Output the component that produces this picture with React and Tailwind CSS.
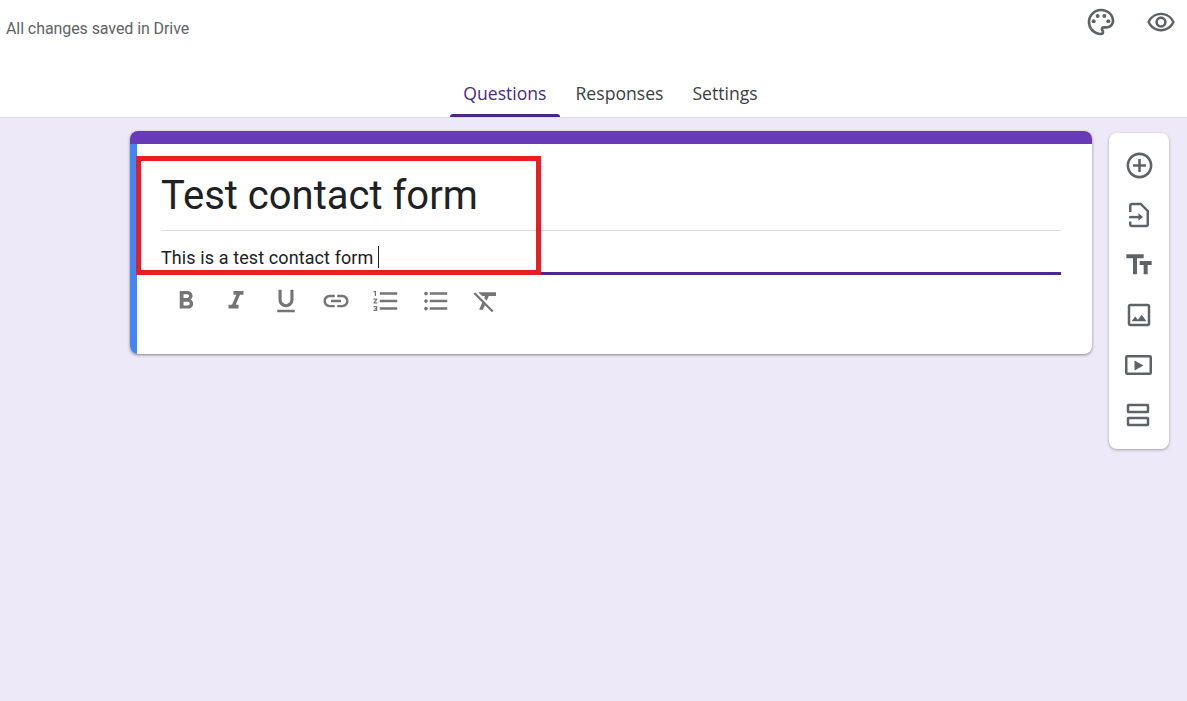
import {
  MdOutlinePalette, MdOutlineRemoveRedEye, MdAddCircleOutline, MdTextFields, MdOutlineImage,
  MdFormatBold, MdFormatItalic, MdFormatUnderlined,
  MdLink, MdFormatListNumbered, MdFormatListBulleted, MdFormatClear,
} from 'react-icons/md';

const ImportIcon = ({ size = 28 }) => (
  <svg width={size} height={size} viewBox="0 0 24 24" fill="none" stroke="currentColor" strokeWidth="2.1">
    <path d="M4.500 9.500V4a1.500 1.500 0 0 1 1.500-1.500H13.500L19.500 8.500V20a1.500 1.500 0 0 1-1.500 1.500H6a1.500 1.500 0 0 1-1.500-1.500V17.500" />
    <path d="M3.500 13.800H12.500" />
    <path d="M11.500 10.500V17L15.500 13.800z" fill="currentColor" stroke="none" />
  </svg>
);

const VideoIcon = ({ size = 28 }) => (
  <svg width={size} height={size} viewBox="0 0 28 28" fill="none" stroke="currentColor" strokeWidth="2.5">
    <rect x="1.250" y="5.250" width="24.500" height="17.500" rx="1" />
    <path d="M9.500 9.500V19.500L18.500 14.500z" fill="currentColor" stroke="none" />
  </svg>
);

const SectionIcon = ({ size = 28 }) => (
  <svg width={size} height={size} viewBox="0 0 28 28" fill="none" stroke="currentColor" strokeWidth="2.5">
    <rect x="3" y="4" width="20" height="7" rx="0.5" />
    <rect x="3" y="17" width="20" height="7" rx="0.5" />
  </svg>
);

const tools = [MdFormatBold, MdFormatItalic, MdFormatUnderlined, MdLink, MdFormatListNumbered, MdFormatListBulleted, MdFormatClear];
const sideIcons = [
  { Icon: MdAddCircleOutline, size: 31 },
  { Icon: ImportIcon, size: 28 },
  { Icon: MdTextFields, size: 32 },
  { Icon: MdOutlineImage, size: 30 },
  { Icon: VideoIcon, size: 28 },
  { Icon: SectionIcon, size: 28 },
];

export default function App() {
  return (
    <div className="min-h-[701px] bg-[#eee9f8] font-['Roboto',sans-serif] overflow-hidden">
      {/* Top bar */}
      <header className="bg-white h-[118px] border-b border-[#dadce0] flex flex-col">
        <div className="flex justify-between h-[73px]">
          <span className="pl-[6px] pt-[20px] text-[16px] leading-[18px] tracking-[-0.08px] text-[#5f6368]">All changes saved in Drive</span>
          <div className="flex items-center h-[44px] gap-[29px] pr-[11px] text-[#5f6368]">
            <MdOutlinePalette size={32} />
            <MdOutlineRemoveRedEye size={30} />
          </div>
        </div>
        <nav className="flex justify-center gap-[3px] h-[44px] text-[17.6px] text-[#3c4043] font-['Open_Sans',sans-serif] pl-[34px]">
          <a className="relative px-[13px] leading-[40px] text-[#4a2a8a]">
            Questions
            <span className="absolute left-0 right-0 bottom-0 h-[3px] rounded-t bg-[#4a2685]"></span>
          </a>
          <a className="px-[13px] leading-[40px]">Responses</a>
          <a className="px-[13px] leading-[40px]">Settings</a>
        </nav>
      </header>

      <main className="flex items-start pl-[130px] pt-[13px] gap-[17px]">
        {/* Form title card */}
        <div className="relative w-[962px] h-[223px] bg-white rounded-lg shadow-[0_1px_3px_rgba(60,64,67,0.6)] overflow-hidden">
          <div className="h-[13px] bg-[#673ab7]"></div>
          <div className="h-[210px] border-l-[7px] border-[#4285f4] pl-[24px] pr-[31px]">
            <h1 className="text-[40px] leading-[48px] pt-[28px] h-[87px] text-[#202124] border-b border-[#dadce0] box-border">Test contact form</h1>
            <div className="h-[44px] border-b-[3px] border-[#4a2a8a] pt-[15px] text-[18px] leading-[24px] tracking-[0.1px] text-[#202124] flex items-start">
              <span>This is a test contact form</span>
              <span className="ml-[5px] w-px h-[22px] bg-[#202124]"></span>
            </div>
            <div className="flex items-center gap-[20px] pt-[11px] pl-[10px] text-[#757575]">
              {tools.map((Icon, i) => <Icon key={i} size={30} />)}
            </div>
          </div>
        </div>

        {/* Side toolbar */}
        <aside className="w-[60px] h-[316px] mt-[2px] bg-white rounded-lg shadow-[0_1px_3px_rgba(60,64,67,0.45)] flex flex-col items-center pt-[7px] text-[#5f6368]">
          {sideIcons.map(({ Icon, size }, i) => (
            <div key={i} className="h-[50px] flex items-center justify-center">
              <Icon size={size} />
            </div>
          ))}
        </aside>
      </main>

      {/* Red annotation box */}
      <div className="absolute left-[136px] top-[156px] w-[405px] h-[119px] border-[5px] border-[#ed1c24]"></div>
    </div>
  );
}
